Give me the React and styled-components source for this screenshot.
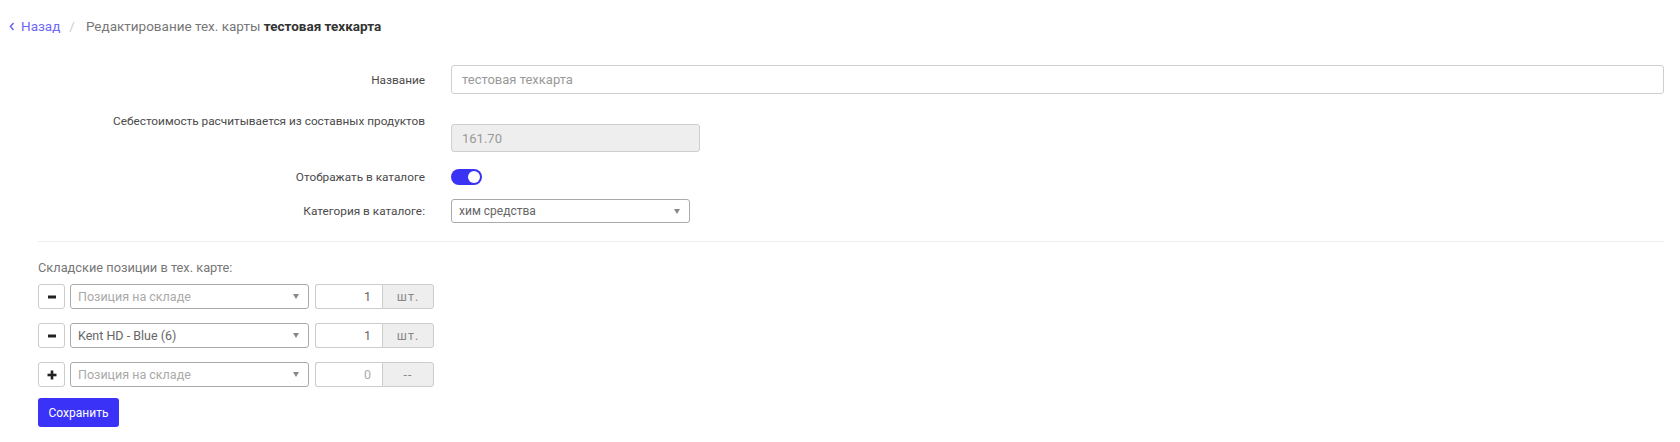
import React from "react";
import styled, { createGlobalStyle } from "styled-components";

const GlobalStyle = createGlobalStyle`
  body {
    margin: 0;
    background: #ffffff;
    font-family: Roboto, "Liberation Sans", Arial, sans-serif;
    color: #444444;
  }
`;

const Page = styled.div`
  width: 1680px;
`;

const Breadcrumb = styled.nav`
  display: flex;
  align-items: center;
  height: 20px;
  padding: 16px 9px 0;
  font-size: 13.5px;
  color: #777777;
  a {
    color: #6e68f6;
    text-decoration: none;
    display: flex;
    align-items: center;
    gap: 6px;
  }
  .sep {
    color: #cccccc;
    margin: 0 11px 0 9px;
  }
  b {
    color: #333333;
    font-weight: 700;
  }
`;

const Form = styled.div`
  padding: 29px 16px 0 38px;
`;

const Row = styled.div`
  display: grid;
  grid-template-columns: 387px 1fr;
  column-gap: 26px;
  align-items: ${(p) => (p.$top ? "start" : "center")};
  margin-bottom: ${(p) => p.$mb || 0}px;
`;

const Label = styled.div`
  text-align: right;
  font-size: 11.8px;
  line-height: 18px;
  color: #4a4a4a;
`;

const TextInput = styled.div`
  box-sizing: border-box;
  height: ${(p) => p.$h || 29}px;
  width: ${(p) => (p.$w ? p.$w + "px" : "100%")};
  margin-top: ${(p) => p.$mt || 0}px;
  border: 1px solid #cfcfcf;
  border-radius: 3px;
  background: ${(p) => (p.$disabled ? "#eeeeee" : "#ffffff")};
  padding: 0 10px;
  display: flex;
  align-items: center;
  font-size: 13px;
  color: #999999;
`;

const Toggle = styled.div`
  width: 31px;
  height: 16px;
  border-radius: 8px;
  background: #3a33f3;
  position: relative;
  span {
    position: absolute;
    right: 2px;
    top: 2px;
    width: 12px;
    height: 12px;
    border-radius: 50%;
    background: #ffffff;
  }
`;

const Select = styled.div`
  box-sizing: border-box;
  width: ${(p) => p.$w}px;
  height: ${(p) => p.$h || 24}px;
  border: 1px solid #aaaaaa;
  border-radius: 3px;
  background: #ffffff;
  display: flex;
  align-items: center;
  justify-content: space-between;
  padding: 0 9px 0 7px;
  font-size: ${(p) => p.$fs || 12}px;
  color: ${(p) => (p.$placeholder ? "#aaaaaa" : "#666666")};
  &:after {
    content: "";
    border-left: 3.5px solid transparent;
    border-right: 3.5px solid transparent;
    border-top: 5px solid #888888;
  }
`;

const Divider = styled.hr`
  border: 0;
  border-top: 1px solid #eeeeee;
  margin: 18px 0 0;
`;

const SectionTitle = styled.div`
  font-size: 12.8px;
  line-height: 18px;
  color: #777777;
  margin: 17px 0 7px;
`;

const ItemRow = styled.div`
  display: flex;
  align-items: center;
  height: 25px;
  margin-bottom: 14px;
`;

const IconButton = styled.button`
  box-sizing: border-box;
  width: 27px;
  height: 25px;
  padding: 0;
  margin-right: 5px;
  border: 1px solid #cccccc;
  border-radius: 3px;
  background: #ffffff;
  display: flex;
  align-items: center;
  justify-content: center;
`;

const QtyGroup = styled.div`
  display: flex;
  margin-left: 6px;
  height: 25px;
`;

const Qty = styled.div`
  box-sizing: border-box;
  width: 67px;
  border: 1px solid #cccccc;
  border-right: 0;
  border-radius: 3px 0 0 3px;
  display: flex;
  align-items: center;
  justify-content: flex-end;
  padding-right: 11px;
  font-size: 12.5px;
  color: ${(p) => (p.$empty ? "#aaaaaa" : "#666666")};
`;

const Addon = styled.div`
  box-sizing: border-box;
  width: 52px;
  border: 1px solid #cccccc;
  border-radius: 0 3px 3px 0;
  background: #eeeeee;
  display: flex;
  align-items: center;
  justify-content: center;
  font-size: 12.5px;
  letter-spacing: 1px;
  color: #888888;
`;

const SaveButton = styled.button`
  box-sizing: border-box;
  margin-top: -3px;
  width: 81px;
  height: 29px;
  border: 0;
  border-radius: 3px;
  background: #3a33f7;
  color: #ffffff;
  font-family: Roboto, "Liberation Sans", Arial, sans-serif;
  font-size: 12px;
`;

const Minus = () => (
  <svg width="10" height="10" viewBox="0 0 10 10">
    <rect x="1" y="3.5" width="8" height="3" fill="#222" />
  </svg>
);

const Plus = () => (
  <svg width="10" height="10" viewBox="0 0 10 10">
    <rect x="0.5" y="3.7" width="9" height="2.6" fill="#222" />
    <rect x="3.7" y="0.5" width="2.6" height="9" fill="#222" />
  </svg>
);

const items = [
  { icon: "minus", name: "Позиция на складе", placeholder: true, qty: "1", unit: "шт." },
  { icon: "minus", name: "Kent HD - Blue (6)", placeholder: false, qty: "1", unit: "шт." },
  { icon: "plus", name: "Позиция на складе", placeholder: true, qty: "0", unit: "--", empty: true },
];

export default function App() {
  return (
    <Page>
      <GlobalStyle />
      <Breadcrumb>
        <a href="#">
          <svg width="6" height="9" viewBox="0 0 6 9">
            <path d="M4.5 1 L1.5 4.5 L4.5 8" stroke="#6e68f6" strokeWidth="1.6" fill="none" />
          </svg>
          Назад
        </a>
        <span className="sep">/</span>
        <span>
          Редактирование тех. карты <b>тестовая техкарта</b>
        </span>
      </Breadcrumb>

      <Form>
        <Row $mb={18}>
          <Label>Название</Label>
          <TextInput>тестовая техкарта</TextInput>
        </Row>
        <Row $top $mb={16}>
          <Label>Себестоимость расчитывается из составных продуктов</Label>
          <TextInput $disabled $w={249} $h={28} $mt={12}>
            161.70
          </TextInput>
        </Row>
        <Row $mb={13}>
          <Label>Отображать в каталоге</Label>
          <Toggle>
            <span />
          </Toggle>
        </Row>
        <Row>
          <Label>Категория в каталоге:</Label>
          <Select $w={239}>хим средства</Select>
        </Row>
        <Divider />
        <SectionTitle>Складские позиции в тех. карте:</SectionTitle>
        {items.map((x, i) => (
          <ItemRow key={i}>
            <IconButton>{x.icon === "plus" ? <Plus /> : <Minus />}</IconButton>
            <Select $w={239} $h={25} $fs={12.5} $placeholder={x.placeholder}>
              {x.name}
            </Select>
            <QtyGroup>
              <Qty $empty={x.empty}>{x.qty}</Qty>
              <Addon>{x.unit}</Addon>
            </QtyGroup>
          </ItemRow>
        ))}
        <SaveButton>Сохранить</SaveButton>
      </Form>
    </Page>
  );
}
